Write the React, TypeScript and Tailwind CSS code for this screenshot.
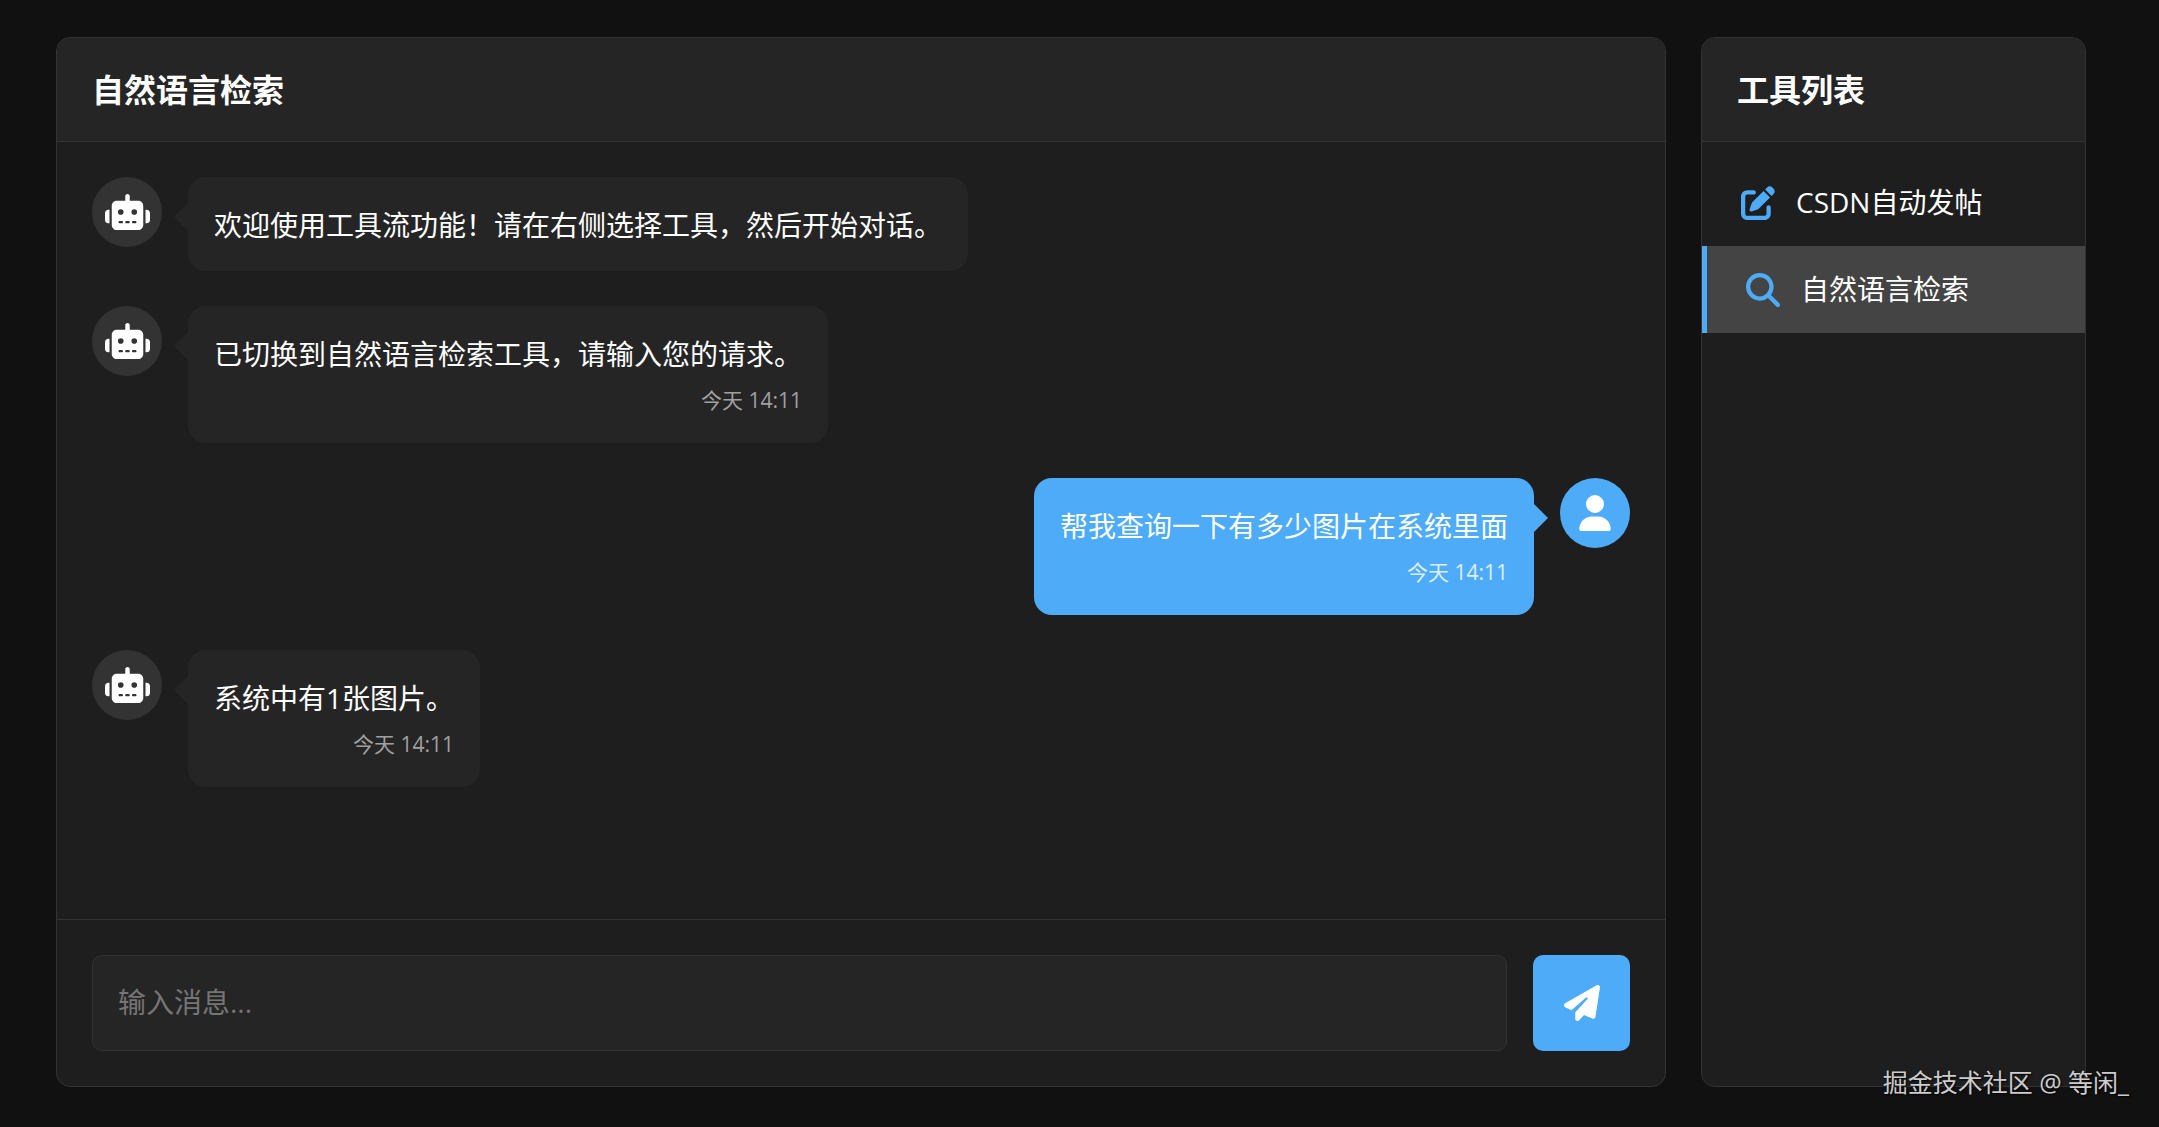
import { useState, type FC, type FormEvent } from 'react';
import type { IconType } from 'react-icons';
import {
  FaMagnifyingGlass,
  FaPaperPlane,
  FaPenToSquare,
  FaRobot,
  FaUser,
} from 'react-icons/fa6';

interface Message {
  id: number;
  role: 'bot' | 'user';
  text: string;
  time?: string;
}

interface Tool {
  id: string;
  name: string;
  icon: IconType;
}

const tools: Tool[] = [
  { id: 'csdn', name: 'CSDN自动发帖', icon: FaPenToSquare },
  { id: 'search', name: '自然语言检索', icon: FaMagnifyingGlass },
];

const initialMessages: Message[] = [
  { id: 1, role: 'bot', text: '欢迎使用工具流功能！请在右侧选择工具，然后开始对话。' },
  { id: 2, role: 'bot', text: '已切换到自然语言检索工具，请输入您的请求。', time: '今天 14:11' },
  { id: 3, role: 'user', text: '帮我查询一下有多少图片在系统里面', time: '今天 14:11' },
  { id: 4, role: 'bot', text: '系统中有1张图片。', time: '今天 14:11' },
];

const MessageRow: FC<{ message: Message }> = ({ message }) => {
  const isUser = message.role === 'user';
  const Icon = isUser ? FaUser : FaRobot;

  return (
    <li className={`flex items-start gap-[26px] ${isUser ? 'flex-row-reverse' : ''}`}>
      <div
        className={`flex size-[70px] shrink-0 items-center justify-center rounded-full ${
          isUser ? 'bg-[#4dabf7]' : 'bg-[#333333]'
        }`}
      >
        <Icon className={isUser ? 'h-9 w-8' : 'h-9 w-[45px]'} />
      </div>

      <div
        className={`relative max-w-[70%] rounded-[18px] px-[26px] pt-[25px] pb-[23px] ${
          isUser ? 'bg-[#4dabf7]' : 'bg-[#252525]'
        }`}
      >
        {/* Bubble tail */}
        <span
          className={`absolute top-[26px] border-y-[14px] border-y-transparent ${
            isUser
              ? 'left-full border-l-[14px] border-l-[#4dabf7]'
              : 'right-full border-r-[14px] border-r-[#252525]'
          }`}
        />
        <p className="leading-[46px]">{message.text}</p>
        {message.time && (
          <div
            className={`mt-[3px] text-right text-[21px] leading-10 ${
              isUser ? 'text-white/80' : 'text-[#a0a0a0]'
            }`}
          >
            {message.time}
          </div>
        )}
      </div>
    </li>
  );
};

export default function App() {
  const [messages, setMessages] = useState(initialMessages);
  const [activeTool, setActiveTool] = useState('search');
  const [draft, setDraft] = useState('');

  const title = tools.find((tool) => tool.id === activeTool)?.name;

  const handleSubmit = (e: FormEvent) => {
    e.preventDefault();
    if (!draft.trim()) return;
    setMessages([...messages, { id: messages.length + 1, role: 'user', text: draft }]);
    setDraft('');
  };

  return (
    <div className="relative flex h-screen gap-[35px] bg-[#111111] pt-[37px] pr-[73px] pb-10 pl-14 font-['Open_Sans','Noto_Sans_CJK_SC',sans-serif] text-[28px] text-white">
      {/* Chat panel */}
      <main className="flex min-w-0 flex-1 flex-col overflow-hidden rounded-[14px] border border-[#333333] bg-[#1e1e1e]">
        <header className="border-b border-[#333333] bg-[#252525] px-[35px] py-[26px]">
          <h1 className="text-[32px] leading-[51px] font-bold">{title}</h1>
        </header>

        <ul className="flex min-h-0 flex-1 flex-col gap-[35px] overflow-y-auto p-[35px]">
          {messages.map((message) => (
            <MessageRow key={message.id} message={message} />
          ))}
        </ul>

        <form onSubmit={handleSubmit} className="flex gap-[26px] border-t border-[#333333] p-[35px]">
          <input
            type="text"
            aria-label="输入消息"
            placeholder="输入消息..."
            value={draft}
            onChange={(e) => setDraft(e.target.value)}
            className="h-24 min-w-0 flex-1 rounded-[10px] border border-[#333333] bg-[#252525] px-[25px] pb-0.5 outline-none placeholder:text-[#757575]"
          />
          <button
            type="submit"
            aria-label="发送"
            className="flex h-24 w-[97px] shrink-0 items-center justify-center rounded-[10px] bg-[#4dabf7]"
          >
            <FaPaperPlane className="size-9" />
          </button>
        </form>
      </main>

      {/* Tool list */}
      <aside className="w-[385px] shrink-0 overflow-hidden rounded-[14px] border border-[#333333] bg-[#1e1e1e]">
        <header className="border-b border-[#333333] bg-[#252525] px-[35px] py-[26px]">
          <h2 className="text-[32px] leading-[51px] font-bold">工具列表</h2>
        </header>

        <nav className="py-[17px]">
          {tools.map(({ id, name, icon: Icon }) => {
            const isActive = id === activeTool;
            return (
              <button
                key={id}
                type="button"
                onClick={() => setActiveTool(id)}
                className={`flex w-full items-center gap-[17px] px-[35px] py-[21px] text-left leading-[45px] ${
                  isActive ? 'border-l-[5px] border-[#4dabf7] bg-[#444444]' : ''
                }`}
              >
                <span className="flex w-[42px] justify-center text-[#4dabf7]">
                  <Icon className="size-[34px]" />
                </span>
                {name}
              </button>
            );
          })}
        </nav>
      </aside>

      <div className="pointer-events-none absolute right-[30px] bottom-[25px] text-[25px] leading-10 text-[#cccccc] [text-shadow:1px_1px_2px_#000000]">
        掘金技术社区 @ 等闲_
      </div>
    </div>
  );
}
